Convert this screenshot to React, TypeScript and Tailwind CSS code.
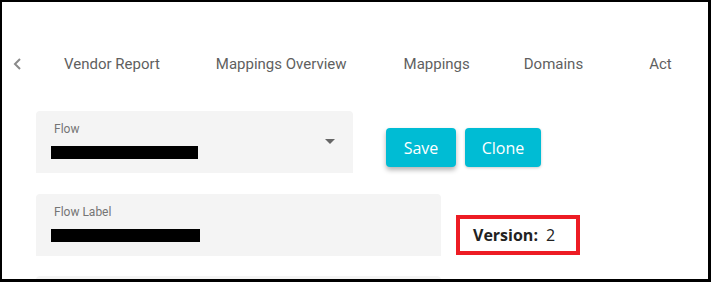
import React from "react";

const tabs = [
	{ label: "Vendor Report", cls: "ml-[43px]" },
	{ label: "Mappings Overview", cls: "ml-[56px]" },
	{ label: "Mappings", cls: "ml-[57px]" },
	{ label: "Domains", cls: "ml-[54px]" },
	{ label: "Act", cls: "ml-[66px]" },
];

function Field({ label, width, barWidth, select }: { label: string; width: string; barWidth: string; select?: boolean }) {
	return (
		<div className={`relative h-[62px] shrink-0 rounded-t-[4px] bg-[#f4f4f4] ${width}`}>
			<div className="pl-[18px] pt-[11px] text-[12px] leading-[14px] text-[#757575]">{label}</div>
			<div className={`ml-[15px] mt-[10px] h-[13px] bg-black ${barWidth}`} />
			{select && (
				<svg className="absolute right-[18px] top-[28px]" width="10" height="5" viewBox="0 0 10 5">
					<path d="M0 0 L10 0 L5 5 Z" fill="#666" />
				</svg>
			)}
		</div>
	);
}

export default function App() {
	return (
		<div className="h-[282px] w-[711px] overflow-hidden border-b-[3px] border-l-2 border-r-[3px] border-t-2 border-black bg-white font-['Roboto',sans-serif]">
			<nav className="mt-[38px] flex h-[48px] w-[680px] items-center overflow-hidden whitespace-nowrap">
				<svg className="ml-[11px] shrink-0" width="8" height="12" viewBox="0 0 8 12">
					<polyline points="7,1 2,6 7,11" fill="none" stroke="#8a8a8a" strokeWidth="2" />
				</svg>
				{tabs.map((t) => (
					<span key={t.label} className={`shrink-0 text-[15px] text-[#5f5f5f] ${t.cls}`}>
						{t.label}
					</span>
				))}
			</nav>

			<div className="ml-[34px] mt-[23px] flex flex-col gap-[21px]">
				<div className="flex items-start">
					<Field label="Flow" width="w-[317px]" barWidth="w-[147px]" select />
					<div className="ml-[33px] mt-[17px] flex gap-[9px] font-['Open_Sans',sans-serif] text-[16px] text-white">
						<button className="h-[39px] w-[70px] rounded-[4px] bg-[#00bcd4] shadow-[0_3px_5px_rgba(0,0,0,0.3)]">Save</button>
						<button className="h-[39px] w-[76px] rounded-[4px] bg-[#00bcd4] shadow-[0_1px_3px_rgba(0,0,0,0.2)]">Clone</button>
					</div>
				</div>
				<div className="flex items-start">
					<Field label="Flow Label" width="w-[405px]" barWidth="w-[149px]" />
					<div className="ml-[15px] mt-[21px] flex h-[40px] w-[124px] items-center border-[4px] border-[#ed1c24] pl-[13px] font-['Open_Sans',sans-serif] text-[16px] text-[#222]">
						<span className="font-bold">Version:</span>
						<span className="ml-[8px]">2</span>
					</div>
				</div>
				<div className="-mt-px h-[62px] w-[405px] rounded-t-[4px] bg-[#f4f4f4]" />
			</div>
		</div>
	);
}
